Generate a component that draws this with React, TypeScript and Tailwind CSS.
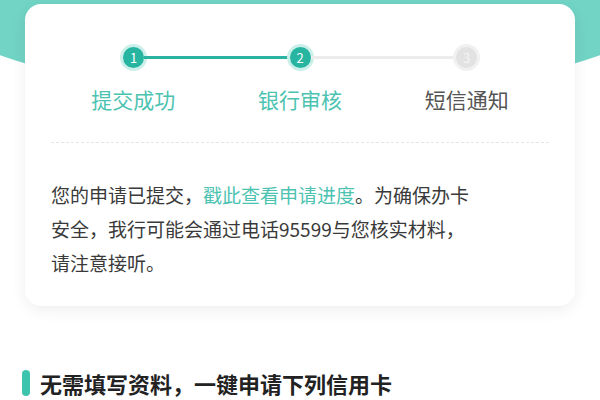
import React from "react";

function StepDot({ n, active }: { n: number; active: boolean }) {
  return (
    <div
      className={
        active
          ? "flex size-[21px] shrink-0 items-center justify-center rounded-full bg-[#27b4a1] text-[13px] text-white ring-[3px] ring-[#cbefe9]"
          : "flex size-[21px] shrink-0 items-center justify-center rounded-full bg-[#e2e2e2] text-[13px] text-[#f4f4f4] ring-[3px] ring-[#f1f1f1]"
      }
    >
      {n}
    </div>
  );
}

export default function App() {
  return (
    <div
      className="relative h-[400px] w-[600px] overflow-hidden bg-white"
      style={{ fontFamily: '"Noto Sans CJK SC", "Noto Sans", sans-serif' }}
    >
      {/* teal header background */}
      <div className="absolute left-[-100px] top-[-149px] h-[246px] w-[800px] rounded-[50%] bg-[#71d4c5]" />

      <div className="relative mx-[25px] mt-[4px] h-[302px] rounded-[16px] bg-white shadow-[0_4px_16px_rgba(0,0,0,0.07)]">
        <div className="flex items-center pl-[98px] pr-[98px] pt-[43px]">
          <StepDot n={1} active />
          <div className="h-[3px] flex-1 bg-[#2ab3a1]" />
          <StepDot n={2} active />
          <div className="h-[3px] flex-1 bg-[#ececec]" />
          <StepDot n={3} active={false} />
        </div>

        <div className="mt-[17px] grid grid-cols-3 px-[25px] text-center text-[21px] leading-[28px]">
          <span className="text-[#4cc3b1]">提交成功</span>
          <span className="text-[#4cc3b1]">银行审核</span>
          <span className="text-[#555555]">短信通知</span>
        </div>

        <div className="mx-[26px] mt-[29px] border-t border-dashed border-[#e6e6e6]" />

        <p className="mt-[35px] px-[26px] text-[19px] leading-[34px] text-[#3a3a3a]">
          您的申请已提交，<span className="text-[#4cc3b1]">戳此查看申请进度</span>。为确保办卡
          <br />
          安全，我行可能会通过电话95599与您核实材料，
          <br />
          请注意接听。
        </p>
      </div>

      <div className="mt-[62px] flex items-center gap-[10px] pl-[22px]">
        <div className="h-[26px] w-[8px] rounded-[4px] bg-[#3cc4ae]" />
        <h2 className="text-[22px] font-bold leading-[30px] text-[#222222]">无需填写资料，一键申请下列信用卡</h2>
      </div>
    </div>
  );
}
